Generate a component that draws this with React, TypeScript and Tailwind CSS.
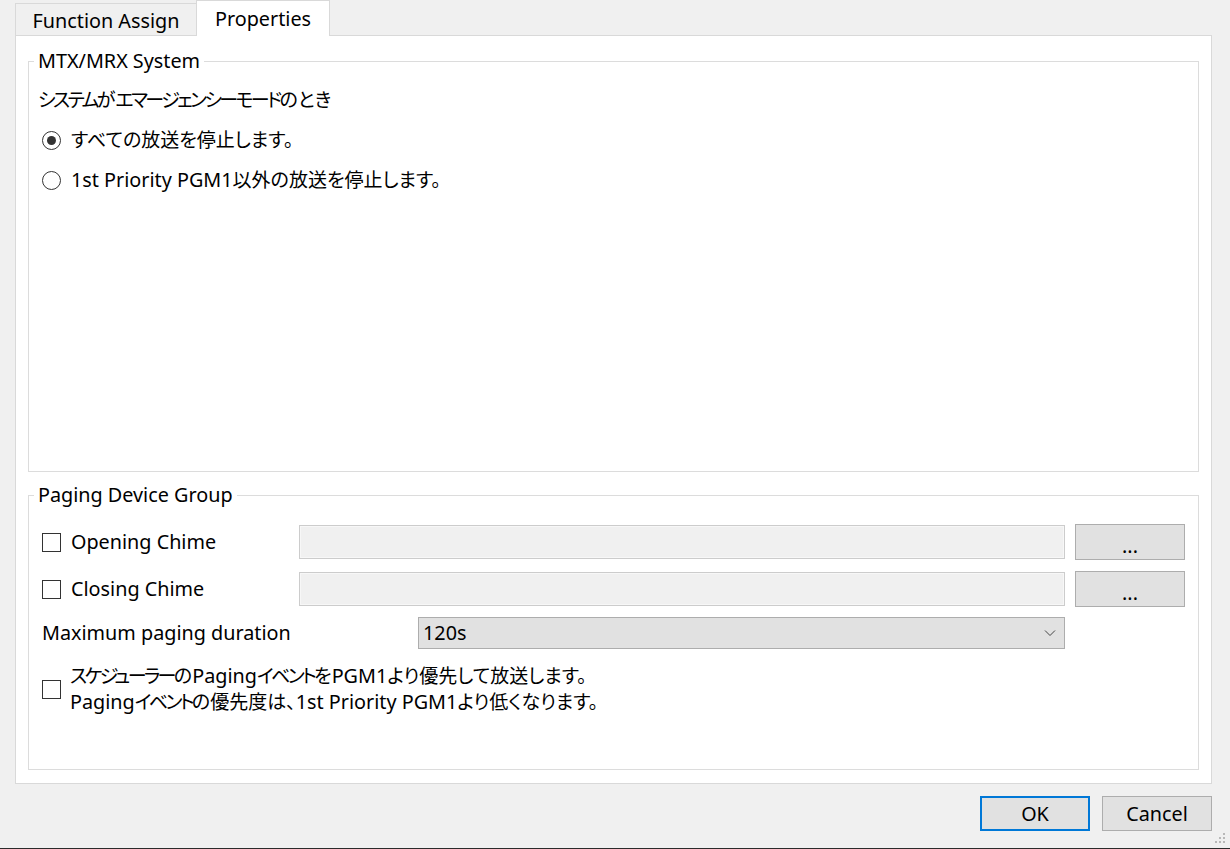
import React from "react";

const font = "font-['Noto_Sans','Noto_Sans_CJK_JP',sans-serif]";

// Japanese runs use proportional widths; katakana is set tighter, like the original UI font
function T({ children }: { children: string }) {
  const parts = children.split(/([\u3000-\u30ff\u4e00-\u9fff\uff00-\uffef]+)/);
  return (
    <>
      {parts.map((p, i) =>
        i % 2 === 1 ? (
          <span key={i} className="text-[19px] [font-feature-settings:'palt']">
            {p.split(/([\u30a0-\u30ff]+)/).map((q, j) =>
              j % 2 === 1 ? (
                <span key={j} className="tracking-[-2.6px]">
                  {q}
                </span>
              ) : (
                <React.Fragment key={j}>{q}</React.Fragment>
              )
            )}
          </span>
        ) : (
          <React.Fragment key={i}>{p}</React.Fragment>
        )
      )}
    </>
  );
}

function Radio({ checked, label }: { checked?: boolean; label: string }) {
  return (
    <div className="flex h-[40px] items-center gap-[10px] pl-[4px]">
      <span className="grid h-[19px] w-[19px] place-items-center rounded-full border border-[#333333] bg-white">
        {checked && <span className="h-[9px] w-[9px] rounded-full bg-[#333333]" />}
      </span>
      <span>
        <T>{label}</T>
      </span>
    </div>
  );
}

function Check() {
  return <span className="block h-[19px] w-[19px] shrink-0 border border-[#333333] bg-white" />;
}

function ChimeRow({ label }: { label: string }) {
  return (
    <div className="flex h-[36px] items-center pl-[4px]">
      <div className="flex w-[257px] items-center gap-[10px]">
        <Check />
        <span>{label}</span>
      </div>
      <div className="h-[34px] w-[766px] border border-[#cccccc] bg-[#f0f0f0] shadow-[inset_0_0_0_1px_#f7f7f7]" />
      <button className="ml-[10px] flex h-[36px] w-[110px] items-end justify-center border border-[#adadad] bg-[#e1e1e1] pb-[3px] leading-[20px]">
        ...
      </button>
    </div>
  );
}

export default function App() {
  return (
    <div
      className={`${font} relative flex h-[849px] w-[1230px] flex-col overflow-hidden border-b border-[#2b2b2b] bg-[#f0f0f0] text-[19.8px] leading-[26px] text-black`}
    >
      {/* tabs */}
      <div className="flex h-[35px] items-end pl-[15px]">
        <div className="flex h-[32px] w-[182px] items-center justify-center border border-b-0 border-[#d9d9d9] bg-[#f0f0f0] pt-[2px]">
          Function Assign
        </div>
        <div className="relative z-10 -mb-px -ml-px flex h-[36px] w-[134px] items-center justify-center border border-b-0 border-[#d9d9d9] bg-white">
          Properties
        </div>
      </div>

      {/* panel */}
      <div className="ml-[15px] flex h-[749px] w-[1197px] flex-col gap-[11px] border border-[#d9d9d9] bg-white px-[12px] pt-[13px]">
        <fieldset className="h-[423px] border border-[#dcdcdc] px-[9px]">
          <legend className="-ml-[4px] px-[4px] leading-[24px]">MTX/MRX System</legend>
          <div className="flex flex-col pt-[7px]">
            <div className="flex h-[40px] items-center">
              <T>システムがエマージェンシーモードのとき</T>
            </div>
            <Radio checked label="すべての放送を停止します。" />
            <Radio label="1st Priority PGM1以外の放送を停止します。" />
          </div>
        </fieldset>

        <fieldset className="h-[287px] border border-[#dcdcdc] px-[9px]">
          <legend className="-ml-[4px] px-[4px] leading-[24px]">Paging Device Group</legend>
          <div className="flex flex-col pt-[17px]">
            <ChimeRow label="Opening Chime" />
            <div className="h-[11px]" />
            <ChimeRow label="Closing Chime" />
            <div className="h-[10px]" />
            <div className="flex h-[32px] items-center pl-[4px]">
              <span className="w-[376px]">Maximum paging duration</span>
              <div className="flex h-[32px] w-[647px] items-center justify-between border border-[#adadad] bg-[#e1e1e1] pl-[4px] pr-[8px]">
                <span>120s</span>
                <svg width="12" height="8" viewBox="0 0 12 8" fill="none">
                  <polyline points="1,1.5 6,6.5 11,1.5" stroke="#444" strokeWidth="1" />
                </svg>
              </div>
            </div>
            <div className="h-[14px]" />
            <div className="flex h-[52px] items-center gap-[9px] pl-[4px]">
              <Check />
              <div className="flex flex-col">
                <span>
                  <T>スケジューラーのPagingイベントをPGM1より優先して放送します。</T>
                </span>
                <span>
                  <T>Pagingイベントの優先度は、1st Priority PGM1より低くなります。</T>
                </span>
              </div>
            </div>
          </div>
        </fieldset>
      </div>

      {/* buttons */}
      <div className="mt-[12px] flex justify-end gap-[12px] pr-[18px]">
        <button className="h-[35px] w-[110px] border-2 border-[#0078d7] bg-[#e1e1e1]">OK</button>
        <button className="h-[35px] w-[110px] border border-[#adadad] bg-[#e1e1e1]">Cancel</button>
      </div>

      {/* resize grip */}
      <svg className="absolute bottom-[3px] right-[3px]" width="12" height="12" viewBox="0 0 12 12">
        <rect x="8" y="0" width="2" height="2" fill="#b8b8b8" />
        <rect x="4" y="4" width="2" height="2" fill="#b8b8b8" />
        <rect x="8" y="4" width="2" height="2" fill="#b8b8b8" />
        <rect x="0" y="8" width="2" height="2" fill="#b8b8b8" />
        <rect x="4" y="8" width="2" height="2" fill="#b8b8b8" />
        <rect x="8" y="8" width="2" height="2" fill="#b8b8b8" />
      </svg>
    </div>
  );
}
